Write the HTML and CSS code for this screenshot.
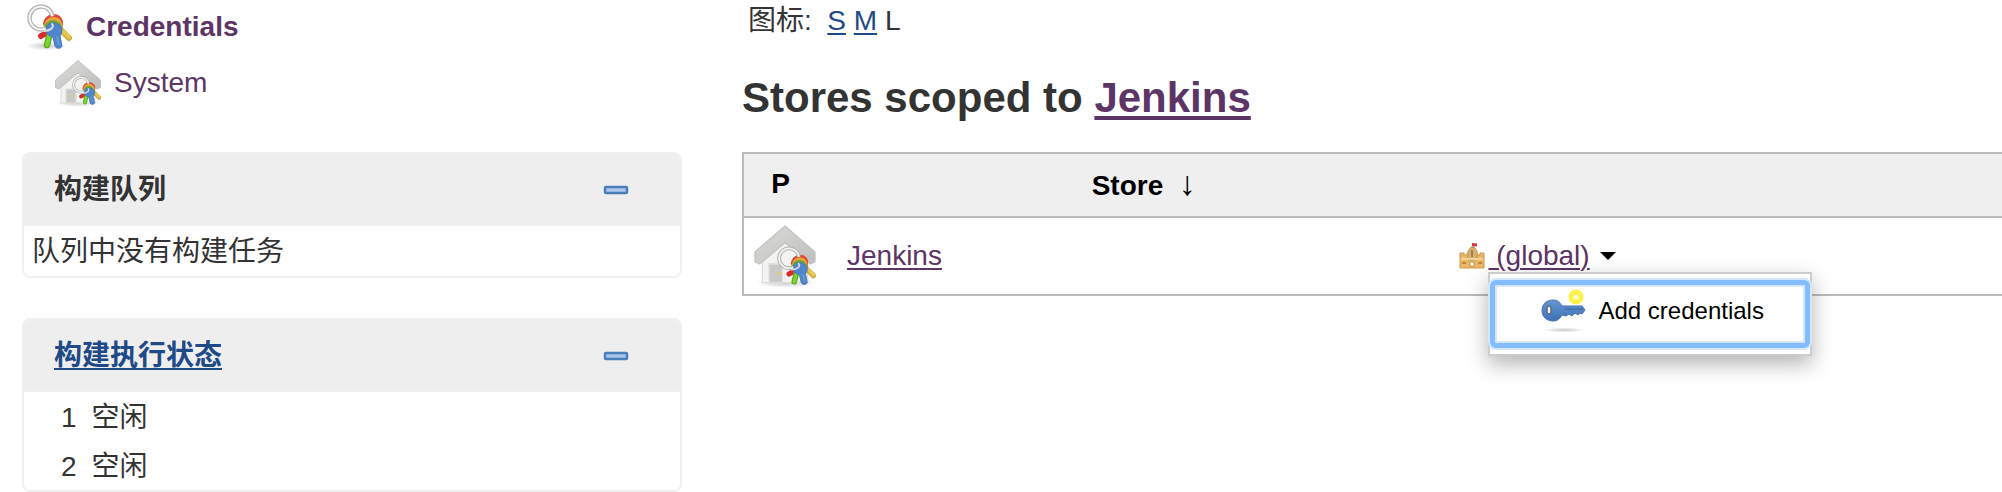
FILE: index.html
```html
<!DOCTYPE html>
<html lang="zh-CN">
<head>
<meta charset="utf-8">
<title>Jenkins Credentials</title>
<link rel="stylesheet" href="styles.css">
</head>
<body>
<svg class="sprites" aria-hidden="true">
  <defs>
    <radialGradient id="shade">
      <stop offset="0" stop-color="#000" stop-opacity=".22"/>
      <stop offset="1" stop-color="#000" stop-opacity="0"/>
    </radialGradient>
    <linearGradient id="roof" x1="0" y1="0" x2="1" y2="1">
      <stop offset="0" stop-color="#dcdcda"/>
      <stop offset="1" stop-color="#bdbdbb"/>
    </linearGradient>
    <linearGradient id="steel" x1="0" y1="0" x2="0" y2="1">
      <stop offset="0" stop-color="#6595d2"/>
      <stop offset="1" stop-color="#3f72b4"/>
    </linearGradient>
  </defs>
  <symbol id="bunch" viewBox="0 0 48 48">
    <g fill="none" stroke-linecap="round">
      <path d="M34 24 45 35" stroke="#cba93a" stroke-width="6"/>
      <path d="M35 24 45 34" stroke="#e6c650" stroke-width="4"/>
      <path d="m26 28-9 5" stroke="#d92b2b" stroke-width="6"/>
      <path d="m26 30-3 12" stroke="#58a81c" stroke-width="6.500"/>
      <path d="m26 30-3 12" stroke="#78d62c" stroke-width="4"/>
    </g>
    <path d="M19 21c1-7 6-10 11-10s9 4 9 9l-1 7-17-1z" fill="#dc4a35"/>
    <path d="M20 23c1-6 5-9 10-9s8 4 8 8l-1 6-16-1z" fill="#e9a53a"/>
    <path d="M20 25c1-5 5-8 9-8s9 4 9 8l-2 4-15-2z" fill="#6aa63a"/>
    <path d="M22 27c0-4 3-7 7-7s9 3 9 7c0 3-1 4-2 6l2 10c-1 3-6 3-7 0l-2-9c-4-1-7-3-7-7z" fill="#4f85ca" stroke="#4477b8"/>
    <circle cx="17" cy="15" r="11.500" fill="none" stroke="#b4b4b2" stroke-width="4.500" stroke-dasharray="57 15" stroke-dashoffset="-13"/>
    <circle cx="17" cy="15" r="11.500" fill="none" stroke="#f3f3f2" stroke-width="2" stroke-dasharray="57 15" stroke-dashoffset="-13"/>
    <path d="M28 21c3 3-2 7-8 7" fill="none" stroke="#d9dde2" stroke-width="2" stroke-linecap="round"/>
    <path d="m33 33 2 9" fill="none" stroke="#6f9fdb" stroke-width="1.500"/>
  </symbol>
  <symbol id="credentials" viewBox="0 0 48 48">
    <ellipse cx="22" cy="43" rx="20" ry="4.500" fill="url(#shade)"/>
    <use href="#bunch" width="48" height="48"/>
  </symbol>
  <symbol id="house" viewBox="0 0 48 48">
    <ellipse cx="24" cy="44" rx="22" ry="4" fill="url(#shade)"/>
    <path d="M7 22 24 9l17 13v22H7z" fill="#f3f3f2" stroke="#dcdcda"/>
    <path d="M12 30h10v14H12z" fill="#c9c9c7" stroke="#dededc"/>
    <circle cx="19.500" cy="37" r="1" fill="#e8d24a"/>
    <path d="M24 1.500 46.500 21v7.500L43 30 24 14 5 30l-3.500-1.500V21z" fill="url(#roof)" stroke="#c4c4c2" stroke-linejoin="round"/>
    <use href="#bunch" transform="translate(16 16) scale(.65)" width="48" height="48"/>
  </symbol>
  <symbol id="castle" viewBox="0 0 32 32">
    <path d="M4 13h4v2h3v-2h2v2h6v-2h2v2h3v-2h4v15H4z" fill="#e9b868" stroke="#d29a48"/>
    <path d="M12 20v-9l3-4h3l3 4v9z" fill="#d9b06c" stroke="#c09555"/>
    <path d="M16 10v7" stroke="#9c8058" stroke-width="2"/>
    <path d="M5 19h22" stroke="#f3d294" stroke-width="2"/>
    <circle cx="16" cy="24" r="2.500" fill="#fff6df" stroke="#c88a35"/>
    <path d="M6 23h4m12 0h4" stroke="#c38636" stroke-width="2"/>
    <path d="M17 8V4" stroke="#888"/>
    <path d="M16 3l5 .5v3L16 6z" fill="#e0343f"/>
  </symbol>
  <symbol id="key" viewBox="0 0 48 48">
    <ellipse cx="26" cy="43" rx="21" ry="2.500" fill="url(#shade)"/>
    <path d="M15 13c4 0 7 2 9 6h20l3 4-3 4-2-1-2 2-3-2-3 3-3-2-3 2-4-1c-2 4-5 6-9 6-6 0-11-4-11-10.500S9 13 15 13z" fill="url(#steel)" stroke="#4273b2" stroke-linejoin="round"/>
    <path d="M27 22h18" stroke="#35629f"/>
    <rect x="9" y="19" width="4" height="8" rx="2" fill="#f2f2ee" stroke="#556f88" stroke-width="1.500"/>
    <circle cx="38" cy="10" r="5" fill="#fffde0" stroke="#fff04a" stroke-width="5"/>
  </symbol>
  <symbol id="minus" viewBox="0 0 32 32">
    <rect x="6" y="13" width="22" height="6" rx="1" fill="#a9c7ea" stroke="#4a7ebb" stroke-width="2.500"/>
  </symbol>
</svg>

<div class="page">
  <aside class="side">
    <nav class="tasks">
      <a class="task task-current" href="#"><svg class="icon-m"><use href="#credentials"/></svg>Credentials</a>
      <a class="task task-sub" href="#"><svg class="icon-m"><use href="#house"/></svg>System</a>
    </nav>

    <section class="pane">
      <header class="pane-head">
        <h2 class="pane-title">构建队列</h2>
        <button class="collapse" type="button" aria-label="collapse"><svg class="icon-s"><use href="#minus"/></svg></button>
      </header>
      <p class="pane-text">队列中没有构建任务</p>
    </section>

    <section class="pane">
      <header class="pane-head">
        <h2 class="pane-title"><a class="link" href="#">构建执行状态</a></h2>
        <button class="collapse" type="button" aria-label="collapse"><svg class="icon-s"><use href="#minus"/></svg></button>
      </header>
      <table class="executors">
        <tr><td class="num">1</td><td>空闲</td></tr>
        <tr><td class="num">2</td><td>空闲</td></tr>
      </table>
    </section>
  </aside>

  <main class="main">
    <div class="sizes">图标:&nbsp; <a class="link" href="#">S</a> <a class="link" href="#">M</a> L</div>
    <h1 class="title">Stores scoped to <a class="visited" href="#">Jenkins</a></h1>
    <table class="stores">
      <thead>
        <tr><th class="col-p">P</th><th class="col-store">Store&nbsp; <span class="arrow">↓</span></th><th></th></tr>
      </thead>
      <tbody>
        <tr>
          <td class="col-p"><svg class="icon-l"><use href="#house"/></svg></td>
          <td class="col-store"><a class="visited" href="#">Jenkins</a></td>
          <td>
            <div class="domain">
              <svg class="icon-s"><use href="#castle"/></svg>
              <div class="dropdown">
                <a class="visited domain-link" href="#"> (global)</a>
                <div class="menu">
                  <button class="menu-item" type="button"><svg class="icon-m"><use href="#key"/></svg>Add credentials</button>
                </div>
              </div>
              <button class="caret" type="button" aria-label="menu"></button>
            </div>
          </td>
        </tr>
      </tbody>
    </table>
  </main>
</div>
</body>
</html>
```
FILE: styles.css
```css
* {
  box-sizing: border-box;
}

body {
  margin: 0;
  background: #fff;
  color: #333;
  font: 28px/32px "Liberation Sans", "Noto Sans CJK SC", sans-serif;
}

button {
  border: 0;
  padding: 0;
  background: none;
  color: #000;
  font: inherit;
}

svg {
  display: block;
  flex: none;
}

.sprites {
  position: absolute;
  width: 0;
  height: 0;
}

.icon-s {
  width: 32px;
  height: 32px;
}

.icon-m {
  width: 48px;
  height: 48px;
}

.icon-l {
  width: 64px;
  height: 64px;
}

.link {
  color: #204a87;
}

.visited {
  color: #5c3566;
}

.link,
.visited {
  text-decoration-thickness: 2px;
  text-underline-offset: 3px;
}

.page {
  display: grid;
  grid-template-columns: 33.333% 1fr;
  column-gap: 60px;
  padding-left: 22px;
}

.tasks {
  display: flex;
  flex-direction: column;
  gap: 8px;
  padding: 3px 2px 45px;
}

.task {
  display: flex;
  align-items: center;
  gap: 14px;
  color: #5c3566;
  text-decoration: none;
}

.task-current {
  font-weight: bold;
}

.task-sub {
  gap: 12px;
  padding-left: 30px;
}

.pane {
  margin-bottom: 40px;
  border: 2px solid #f0f0f0;
  border-radius: 8px;
}

.pane:last-child {
  margin-bottom: 0;
}

.pane-head {
  display: flex;
  align-items: center;
  justify-content: space-between;
  height: 72px;
  padding: 2px 49px 0 30px;
  border-bottom: 2px solid #f0f0f0;
  border-radius: 6px 6px 0 0;
  background: #eee;
}

.pane-title {
  margin: 0;
  font-size: 28px;
}

.pane-text {
  margin: 0;
  padding: 10px 8px 8px;
}

.executors {
  border-collapse: collapse;
}

.executors td {
  height: 49px;
  padding: 2px 0 0 15px;
}

.executors .num {
  padding-left: 37px;
}

.sizes {
  padding: 5px 6px;
}

.title {
  margin: 32px 0 30px;
  font-size: 42px;
  line-height: 48px;
}

.title .visited {
  text-decoration-thickness: 4px;
  text-underline-offset: 4px;
}

.stores {
  width: 100%;
  border: 2px solid #bbb;
  border-right: 0;
  border-collapse: collapse;
}

.stores th {
  height: 64px;
  padding: 0 0 2px;
  border-bottom: 2px solid #bbb;
  background: #efefef;
  color: #000;
}

.stores td {
  height: 78px;
  padding: 6px 10px 6px 9px;
}

.stores .col-p {
  width: 71px;
  padding-right: 0;
}

.stores .col-store {
  width: 50%;
  padding-left: 30px;
}

.stores th.col-store {
  padding-left: 24px;
}

.arrow {
  font-size: 34px;
  font-weight: normal;
  line-height: 32px;
}

.domain {
  display: flex;
  align-items: center;
  padding-left: 1px;
}

.dropdown {
  position: relative;
}

.domain-link {
  white-space: pre;
}

.caret {
  margin-left: 10px;
  border: 8px solid transparent;
  border-top: 8px solid #000;
  border-bottom: 0;
}

.menu {
  position: absolute;
  top: 100%;
  left: 0;
  padding: 6px 0;
  border: 2px solid #ccc;
  background: #fff;
  box-shadow: 0 8px 20px rgba(0, 0, 0, .3);
}

.menu-item {
  display: flex;
  align-items: center;
  gap: 12px;
  height: 68px;
  padding: 0 41px 6px 43px;
  border: 5px solid #84bdff;
  border-radius: 6px;
  background: #fff;
  box-shadow: 0 0 0 2px #d3e7ff, inset 0 0 0 2px #d3e7ff;
  font-size: 24px;
  white-space: nowrap;
}
```
